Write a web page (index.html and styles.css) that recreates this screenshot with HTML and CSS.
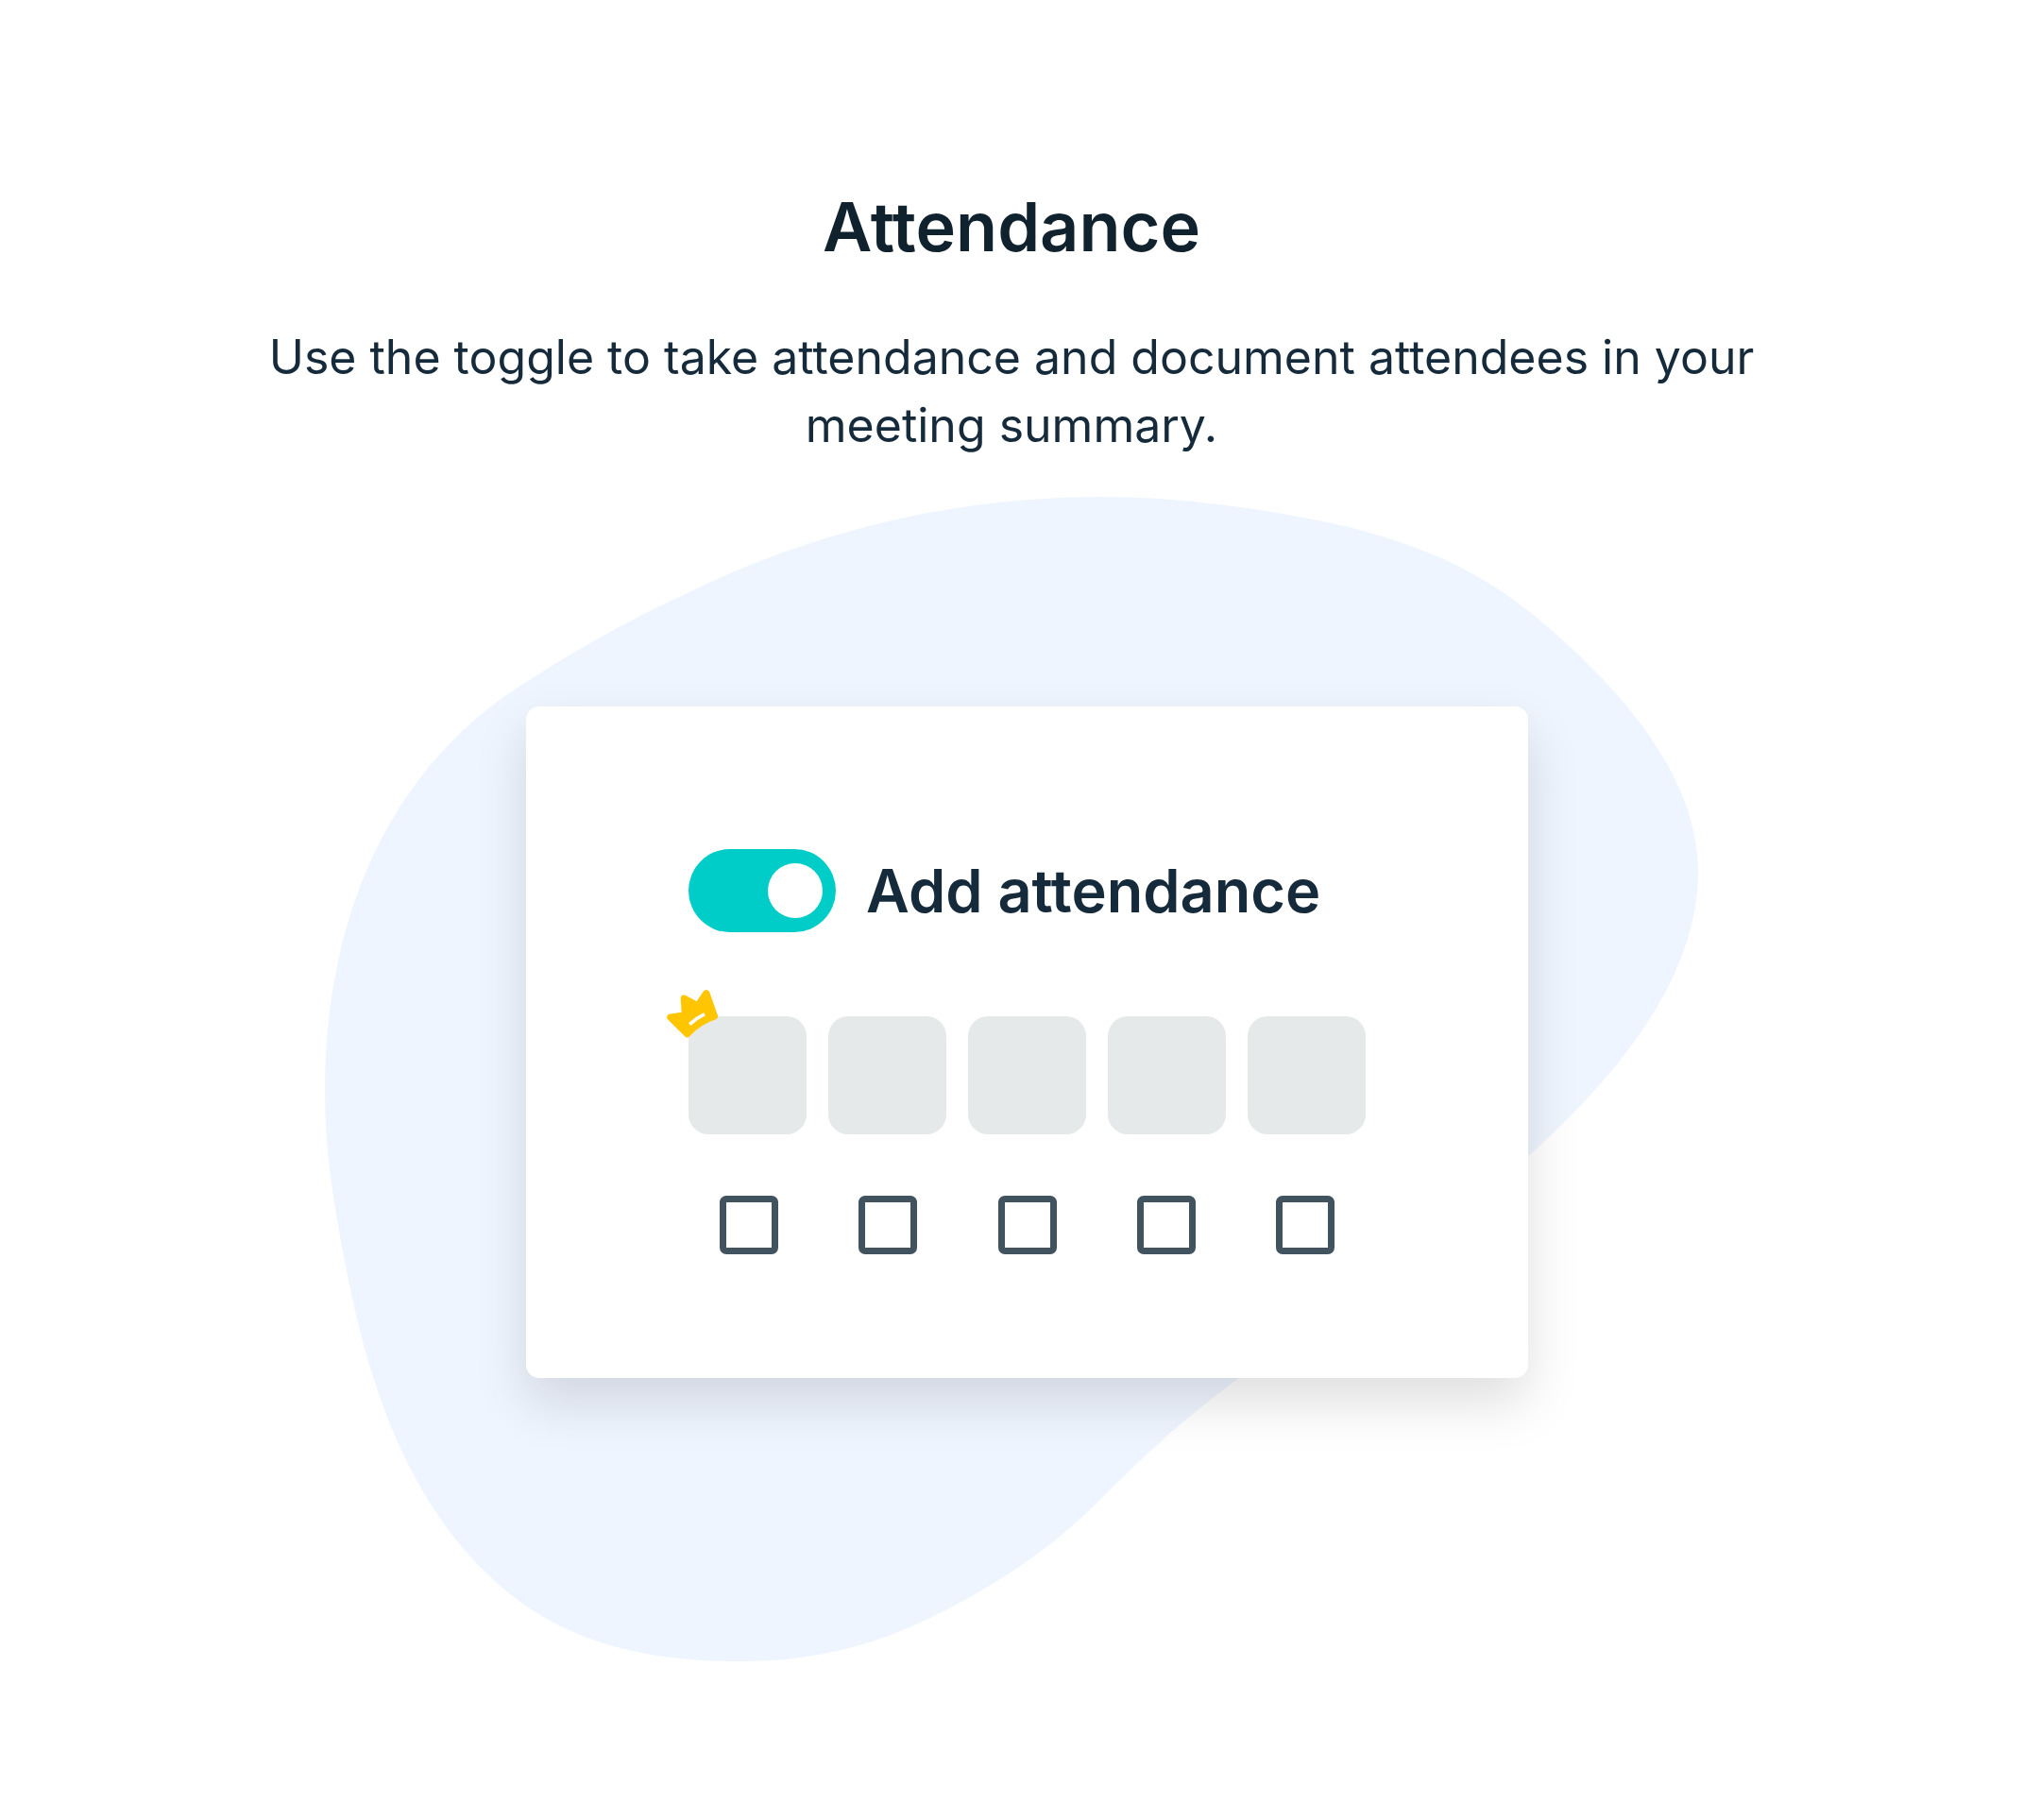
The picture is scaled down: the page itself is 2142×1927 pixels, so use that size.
FILE: index.html
```html
<!DOCTYPE html>
<html lang="en">
<head>
  <meta charset="utf-8">
  <meta name="viewport" content="width=device-width, initial-scale=1">
  <title>Attendance</title>
  <link rel="stylesheet" href="styles.css">
</head>
<body>
  <main class="page">
    <header class="intro">
      <h1 class="title">Attendance</h1>
      <p class="lead">Use the toggle to take attendance and document attendees in your meeting summary.</p>
    </header>
    <section class="illustration">
      <svg class="blob" viewBox="252 385 1065 902" preserveAspectRatio="none" aria-hidden="true">
        <path d="M853 385C905 385 955 391 1000 399C1070 411 1130 430 1185 473C1255 530 1317 600 1317 676C1317 760 1250 838 1184 897C1130 945 1030 1015 960 1068C925 1095 905 1110 850 1165C815 1200 770 1230 720 1254C660 1283 610 1287 570 1287C480 1287 425 1262 385 1226C325 1172 290 1092 270 990C258 930 252 890 252 845C252 700 310 595 395 537C440 507 490 479 530 461C630 412 740 385 853 385Z"/>
      </svg>
      <div class="card">
        <label class="toggle">
          <input class="switch" type="checkbox" role="switch" checked>
          <span>Add attendance</span>
        </label>
        <ul class="people">
          <li class="person">
            <svg class="crown" viewBox="42 48 180 165" aria-hidden="true">
              <path class="crown-shape" d="M56 131L95 125L92 83Q92 67 107 71L143 91L164 59Q173 49 183 59L210 136Q212 144 204 148Q155 164 121 201Q113 209 107 203L50 147Q44 136 56 131Z"/>
              <path class="crown-band" d="M125 160Q143 144 163 134"/>
            </svg>
          </li>
          <li class="person"></li>
          <li class="person"></li>
          <li class="person"></li>
          <li class="person"></li>
        </ul>
        <div class="checks">
          <input class="check" type="checkbox" aria-label="Attendee 1">
          <input class="check" type="checkbox" aria-label="Attendee 2">
          <input class="check" type="checkbox" aria-label="Attendee 3">
          <input class="check" type="checkbox" aria-label="Attendee 4">
          <input class="check" type="checkbox" aria-label="Attendee 5">
        </div>
      </div>
    </section>
  </main>
</body>
</html>
```
FILE: styles.css
```css
* {
  box-sizing: border-box;
}

body {
  margin: 0;
  background: #fff;
  color: #152a3b;
  font-family: Inter, "Liberation Sans", sans-serif;
}

.page {
  display: flex;
  flex-direction: column;
  align-items: center;
  gap: 40px;
  padding: 192px 40px 165px;
}

.intro {
  display: flex;
  flex-direction: column;
  gap: 54px;
  max-width: 1660px;
  text-align: center;
}

.title {
  margin: 0;
  color: #11222f;
  font-size: 72px;
  font-weight: 600;
  line-height: 96px;
}

.lead {
  margin: 0;
  font-size: 50px;
  line-height: 72px;
}

.illustration {
  position: relative;
  width: 100%;
  max-width: 1454px;
  padding: 222px 180px 300px 213px;
}

.blob {
  position: absolute;
  inset: 0;
  width: 100%;
  height: 100%;
  fill: #eff5ff;
}

.card {
  position: relative;
  display: flex;
  flex-direction: column;
  padding: 151px 172px 131px;
  border-radius: 14px;
  background: #fff;
  box-shadow: 0 26px 56px rgba(0, 0, 0, 0.13);
}

.toggle {
  display: flex;
  align-items: center;
  gap: 32px;
  font-size: 63px;
  font-weight: 600;
  line-height: 88px;
}

.switch {
  display: flex;
  justify-content: flex-end;
  flex: none;
  appearance: none;
  width: 156px;
  height: 88px;
  margin: 0;
  padding: 15px 14px;
  border-radius: 44px;
  background: #00cdc8;
}

.switch::before {
  content: "";
  width: 58px;
  height: 58px;
  border-radius: 50%;
  background: #fff;
}

.switch:not(:checked) {
  justify-content: flex-start;
  background: #b8c2c8;
}

.people {
  display: grid;
  grid-template-columns: repeat(5, 1fr);
  gap: 23px;
  margin: 89px 0 65px;
  padding: 0;
  list-style: none;
}

.person {
  position: relative;
  aspect-ratio: 1;
  border-radius: 21px;
  background: #e5e9e9;
}

.crown {
  position: absolute;
  top: -30px;
  left: -25px;
  width: 60px;
  height: 55px;
}

.crown-shape {
  fill: #ffc600;
}

.crown-band {
  fill: none;
  stroke: #fff;
  stroke-width: 11;
  stroke-linecap: square;
}

.checks {
  display: flex;
  justify-content: space-between;
  padding: 0 33px;
}

.check {
  appearance: none;
  width: 62px;
  height: 62px;
  margin: 0;
  border: 7px solid #40535f;
  border-radius: 7px;
}

.check:checked {
  background: #40535f;
}
```
